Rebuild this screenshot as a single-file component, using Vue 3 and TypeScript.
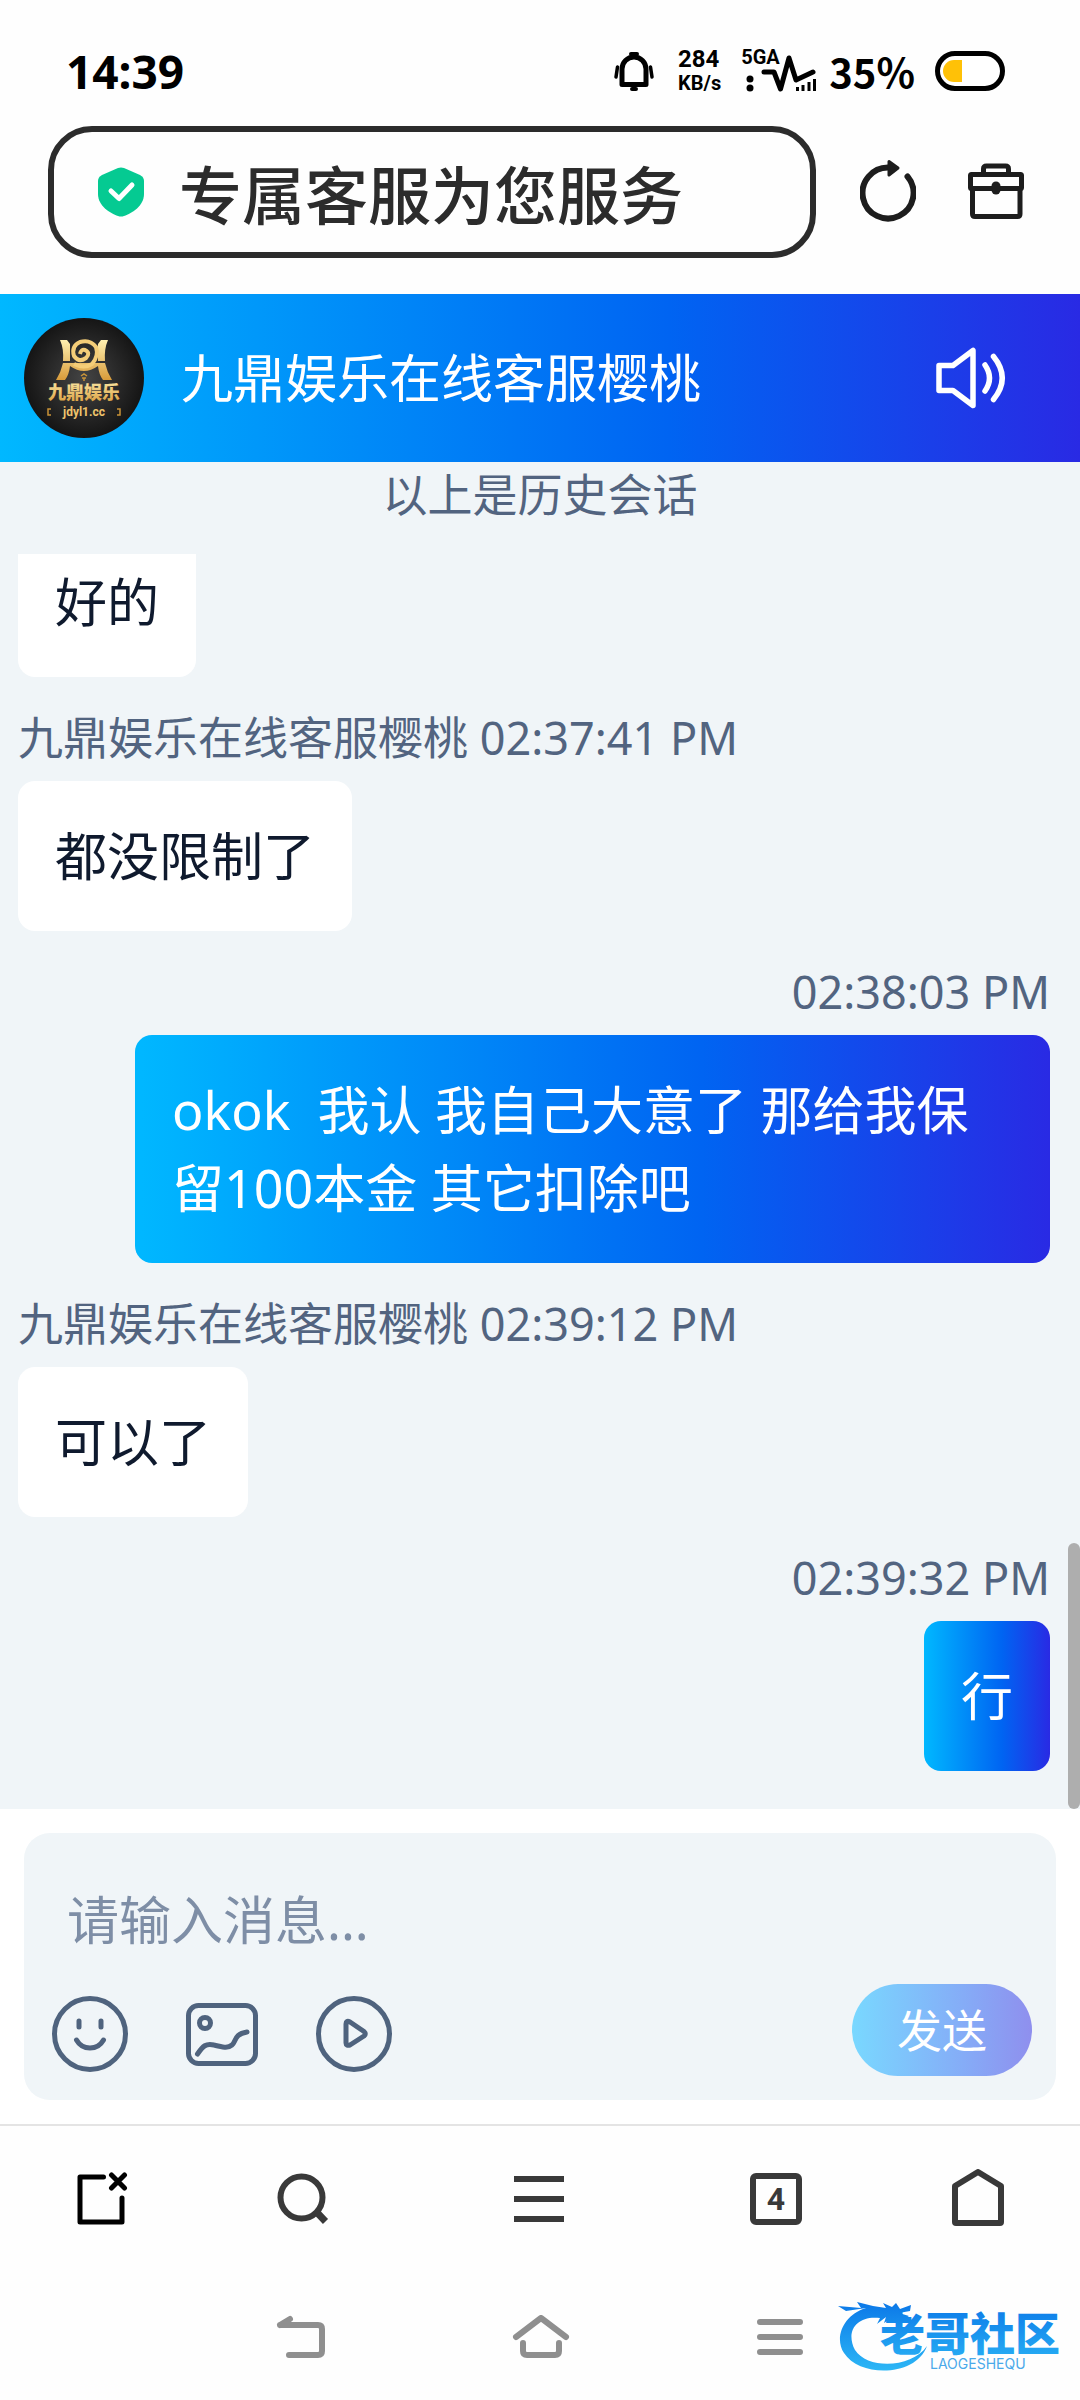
<script setup lang="ts">
import { ref } from 'vue'

interface Message {
  id: number
  mine: boolean
  meta: string
  text: string
}

const agent = '九鼎娱乐在线客服樱桃'
const draft = ref('')

const messages: Message[] = [
  { id: 1, mine: false, meta: '', text: '好的' },
  { id: 2, mine: false, meta: `${agent} 02:37:41 PM`, text: '都没限制了' },
  { id: 3, mine: true, meta: '02:38:03 PM', text: 'okok  我认 我自己大意了 那给我保留100本金 其它扣除吧' },
  { id: 4, mine: false, meta: `${agent} 02:39:12 PM`, text: '可以了' },
  { id: 5, mine: true, meta: '02:39:32 PM', text: '行' },
]
</script>

<template>
  <div class="screen">
    <div class="status">
      <span class="clock">14:39</span>
      <div class="status-right">
        <svg class="bell" width="40" height="40" viewBox="0 0 40 40" aria-hidden="true">
          <path d="M8 33.500V18a12 12 0 0 1 24 0V33.500Z" fill="none" stroke="#000" stroke-width="5" stroke-linejoin="round" />
          <path d="M17 3h6M18 38h4" stroke="#000" stroke-width="4" stroke-linecap="round" />
          <path d="M3.500 16L2 26M36.500 16L38 26" stroke="#000" stroke-width="3.500" stroke-linecap="round" />
        </svg>
        <div class="speed"><span>284</span><span class="unit">KB/s</span></div>
        <div class="signal">
          <span class="network">5GA</span>
          <svg width="76" height="42" viewBox="743 51 76 42" aria-hidden="true">
            <circle cx="752" cy="80" r="3.500" /><circle cx="752" cy="89" r="3.500" />
            <path d="M766 73H776L782.500 90L791 59L798 81L815 73" fill="none" stroke="#000" stroke-width="5" stroke-linecap="round" stroke-linejoin="round" />
            <path d="M799.500 92v-4M805 92v-6M811 92v-9M816.500 92v-12" stroke="#000" stroke-width="3" />
          </svg>
        </div>
        <span class="percent">35%</span>
        <svg class="battery" width="70" height="40" viewBox="0 0 70 40" aria-hidden="true">
          <rect x="2.500" y="2.500" width="65" height="35" rx="17.500" fill="#fff" stroke="#000" stroke-width="5" />
          <path d="M27 9V31H19a11 11 0 0 1 0-22Z" fill="#ffc107" />
        </svg>
      </div>
    </div>

    <div class="browser">
      <label class="address">
        <svg width="46" height="50" viewBox="0 0 46 50" aria-hidden="true">
          <path d="M20 1Q23 0 26 1L42 8Q46 10 46 14V27C46 39 34 46 26 49Q23 50 20 49C12 46 0 39 0 27V14Q0 10 4 8Z" fill="#05ca92" />
          <path d="M13 24L21 31.500L34 18" fill="none" stroke="#fff" stroke-width="5" stroke-linecap="round" stroke-linejoin="round" />
        </svg>
        <input type="text" value="专属客服为您服务" aria-label="网址" readonly />
      </label>
      <button class="plain" aria-label="刷新">
        <svg width="56" height="64" viewBox="860 160 56 64">
          <path d="M907.500 176.500A25.500 25.500 0 1 1 889 167.500" fill="none" stroke="#1d1d1d" stroke-width="6" stroke-linecap="round" />
          <path d="M889 161.500L898 168L889 175Z" fill="#1d1d1d" stroke="#1d1d1d" stroke-width="3" stroke-linejoin="round" />
        </svg>
      </button>
      <button class="plain" aria-label="工具箱">
        <svg width="56" height="64" viewBox="968 160 56 64" fill="none" stroke="#1d1d1d" stroke-width="5">
          <path d="M983.500 174V169Q983.500 166 986.500 166H1005.500Q1008.500 166 1008.500 169V174M972.500 190V214Q972.500 216.500 975 216.500H1017.500Q1020 216.500 1020 214V190" />
          <rect x="970.500" y="174.500" width="51" height="14" rx="1" />
          <path d="M996 186V190" stroke-width="9" stroke-linecap="round" />
        </svg>
      </button>
    </div>

    <header class="agent">
      <svg class="avatar" width="120" height="120" viewBox="0 0 120 120" role="img" aria-label="九鼎娱乐">
        <defs>
          <linearGradient id="gold" x1="0" y1="0" x2="0" y2="1">
            <stop offset="0" stop-color="#fff0b0" /><stop offset="1" stop-color="#d89b3a" />
          </linearGradient>
          <radialGradient id="coal"><stop offset="0" stop-color="#444" /><stop offset="1" stop-color="#151515" /></radialGradient>
        </defs>
        <circle cx="60" cy="60" r="60" fill="url(#coal)" />
        <path d="M36 22H43L46 26V43H39Q40 31 36 22ZM84 22H77L74 26V43H81Q80 31 84 22ZM39 45H81Q83 54 88 62H79Q75 57 74 48Q60 58 46 48Q45 57 41 62H32Q37 54 39 45Z" fill="url(#gold)" />
        <path d="M56 36Q57 31 61 32Q67 35 62 40Q55 45 50 38Q47 28 56 24Q66 21 72 29Q75 38 68 46Q60 51 50 46" fill="none" stroke="#f4cd78" stroke-width="4" />
        <path d="M57 58L60 56L63 58M58 60H62M60 60V63" fill="none" stroke="#c99337" stroke-width="1.500" />
        <text x="60" y="81" text-anchor="middle" font-size="18" font-weight="900" fill="url(#gold)">九鼎娱乐</text>
        <text class="domain" x="60" y="98" text-anchor="middle" font-size="12" font-weight="700" fill="#efc46c">jdyl1.cc</text>
        <path d="M27 91H24V97H27M93 91H96V97H93" fill="none" stroke="#c99337" stroke-width="1.500" />
      </svg>
      <h1>{{ agent }}</h1>
      <button class="plain" aria-label="声音">
        <svg width="72" height="64" viewBox="935 345 72 64" fill="none" stroke="#fff" stroke-width="5.500" stroke-linecap="round" stroke-linejoin="round">
          <path d="M939 364.500H953L973 349.500V404.500L953 389.500H939Z" />
          <path d="M985 364Q994 377 985 390M993.500 355.500Q1011 377 993.500 398.500" />
        </svg>
      </button>
    </header>

    <main class="chat">
      <p class="history">以上是历史会话</p>
      <div class="list">
        <article v-for="m in messages" :key="m.id" :class="{ mine: m.mine, scrolled: !m.meta }">
          <p v-if="m.meta" class="meta">{{ m.meta }}</p>
          <p class="bubble">{{ m.text }}</p>
        </article>
      </div>
      <div class="scrollbar"></div>
    </main>

    <form class="composer" @submit.prevent>
      <div class="box">
        <textarea v-model="draft" rows="1" placeholder="请输入消息..." aria-label="消息"></textarea>
        <div class="toolbar">
          <div class="tools">
            <button type="button" class="plain" aria-label="表情">
              <svg width="76" height="76" viewBox="0 0 76 76" fill="none" stroke="#4f637e" stroke-width="5" stroke-linecap="round">
                <circle cx="38" cy="38" r="35.500" />
                <path d="M27 25V31M49 25V31M24.500 44Q29 52 38 52Q47 52 51.500 44" />
              </svg>
            </button>
            <button type="button" class="plain" aria-label="图片">
              <svg width="76" height="76" viewBox="0 0 76 76" fill="none" stroke="#4f637e" stroke-width="5" stroke-linecap="round">
                <rect x="4.500" y="9.500" width="67" height="58" rx="10" />
                <circle cx="21" cy="27" r="5.500" />
                <path d="M13.500 58C19 50 22 47 30 49C39 51 43 53 48 49C52 46 50 38 63 36" />
              </svg>
            </button>
            <button type="button" class="plain" aria-label="视频">
              <svg width="76" height="76" viewBox="0 0 76 76" fill="none" stroke="#4f637e" stroke-width="5" stroke-linejoin="round">
                <circle cx="38" cy="38" r="35.500" />
                <path d="M30 28Q30 24 34 26L48 35.500Q50.500 38 48 40L34 49Q30 50 30 47Z" />
              </svg>
            </button>
          </div>
          <button class="send">发送</button>
        </div>
      </div>
    </form>

    <nav class="browser-nav">
      <button class="plain" aria-label="关闭标签页">
        <svg width="52" height="56" viewBox="76 2171 52 56" fill="none" stroke="#000" stroke-width="5" stroke-linecap="round" stroke-linejoin="round">
          <path d="M103.500 2177H80V2222H122V2198" />
          <path d="M111.500 2175L124.500 2188M124.500 2175L111.500 2188" />
        </svg>
      </button>
      <button class="plain" aria-label="搜索">
        <svg width="52" height="56" viewBox="277 2171 52 56" fill="none" stroke="#393939" stroke-width="6">
          <circle cx="301.500" cy="2197.500" r="21" /><path d="M317 2212.500L325.500 2221.500" stroke-width="7" />
        </svg>
      </button>
      <button class="plain" aria-label="菜单">
        <svg width="52" height="56" viewBox="0 0 52 56" stroke="#393939" stroke-width="6"><path d="M1 8H51M1 28H51M1 48H51" /></svg>
      </button>
      <button class="plain" aria-label="标签页"><span class="count">4</span></button>
      <button class="plain" aria-label="主页">
        <svg width="52" height="60" viewBox="0 0 52 60" fill="none" stroke="#393939" stroke-width="6" stroke-linejoin="round">
          <path d="M3 17L26 3L49 17V53Q49 54 48 54H4Q3 54 3 53Z" />
        </svg>
      </button>
    </nav>

    <div class="system-nav">
      <button class="plain" aria-label="返回">
        <svg width="50" height="44" viewBox="275 2315 50 44" fill="none" stroke="#8f8f8f" stroke-width="6" stroke-linecap="round">
          <path d="M279 2325H317Q321 2325 321 2329V2351Q321 2355 317 2355H288M279 2325L289 2319" />
        </svg>
      </button>
      <button class="plain" aria-label="桌面">
        <svg width="58" height="44" viewBox="511 2315 58 44" fill="none" stroke="#8f8f8f" stroke-width="6" stroke-linecap="round" stroke-linejoin="round">
          <path d="M515 2337L540 2318L565 2337M522 2343V2351Q522 2355 526 2355H554Q558 2355 558 2351V2343" />
        </svg>
      </button>
      <button class="plain" aria-label="最近任务">
        <svg width="48" height="44" viewBox="0 0 48 44" stroke="#8f8f8f" stroke-width="6" stroke-linecap="round"><path d="M4 7H44M4 22H44M4 37H44" /></svg>
      </button>
      <svg class="community" width="228" height="80" viewBox="836 2296 228 80" role="img" aria-label="老哥社区">
        <defs>
          <linearGradient id="sea" x1="0" y1="2302" x2="0" y2="2372" gradientUnits="userSpaceOnUse">
            <stop offset="0" stop-color="#0b78e8" /><stop offset="1" stop-color="#2db8f6" />
          </linearGradient>
        </defs>
        <path d="M866 2308C843 2315 834 2338 844 2353C860 2378 916 2377 927 2346C912 2368 868 2370 855 2350C845 2331 857 2315 880 2318L877 2324L886 2317L884 2323L893 2317L903 2320L909 2316L899 2313L910 2311L911 2305L900 2309L896 2303L892 2307L883 2303L886 2308L873 2306L857 2302L861 2308L838 2306L846 2311Z" fill="url(#sea)" />
        <text x="880" y="2351" font-size="45" font-weight="900" fill="url(#sea)">老哥社区</text>
        <text class="latin" x="930" y="2369" font-size="14" fill="#4aa9ea">LAOGESHEQU</text>
      </svg>
    </div>
  </div>
</template>

<style>
body {
  background: #fff;
}
</style>

<style scoped>
.screen {
  display: flex;
  flex-direction: column;
  min-height: 100vh;
  background: #fefefe;
  font-family: "Noto Sans", "Noto Sans CJK SC", sans-serif;
}
.screen * {
  box-sizing: border-box;
}
svg {
  display: block;
  flex: none;
}
p,
h1 {
  margin: 0;
  font-weight: 400;
}
.plain {
  display: block;
  padding: 0;
  border: 0;
  background: none;
  font: inherit;
  color: inherit;
}
.status {
  display: flex;
  align-items: center;
  justify-content: space-between;
  height: 110px;
  padding: 32px 75px 0 66px;
  color: #000;
}
.clock {
  font-size: 46px;
  line-height: 48px;
  font-weight: 700;
}
.status-right {
  display: flex;
  align-items: center;
}
.speed {
  display: flex;
  flex-direction: column;
  margin: 0 20px 0 24px;
  font: 700 24px/24px Roboto, sans-serif;
}
.unit {
  font-size: 20px;
}
.signal {
  position: relative;
}
.network {
  position: absolute;
  left: 0;
  top: -3px;
  font: 700 20px/20px Roboto, sans-serif;
}
.percent {
  margin: 0 20px 0 12px;
  font: 700 40px/44px "Noto Sans CJK SC", sans-serif;
}
.browser {
  display: flex;
  align-items: center;
  gap: 52px;
  padding: 16px 56px 36px 48px;
}
.address {
  display: flex;
  flex: 1;
  align-items: center;
  gap: 35px;
  min-width: 0;
  height: 132px;
  margin-right: -8px;
  padding: 0 44px;
  border: 6px solid #2c2c2c;
  border-radius: 44px;
}
.address input {
  flex: 1;
  min-width: 0;
  padding: 0;
  border: 0;
  outline: 0;
  background: none;
  color: #2c2c2c;
  font: 500 63px/90px "Noto Sans CJK SC", sans-serif;
}
.agent {
  display: flex;
  align-items: center;
  gap: 37px;
  height: 168px;
  padding: 0 73px 0 24px;
  background: linear-gradient(90deg, #00b8ff, #0064f2 62%, #292ae4);
  color: #fff;
}
.avatar,
.community {
  font-family: "Noto Sans CJK SC", sans-serif;
}
.domain {
  font-family: Roboto, sans-serif;
}
.latin {
  font-family: Inter, sans-serif;
}
.agent h1 {
  flex: 1;
  font-size: 52px;
  line-height: 78px;
}
.chat {
  position: relative;
  flex: 1;
  background: #f0f5f8;
}
.history {
  height: 92px;
  color: #526480;
  font-size: 45px;
  line-height: 66px;
  text-align: center;
}
.list {
  overflow: hidden;
  padding: 0 30px 38px 18px;
}
article {
  display: flex;
  flex-direction: column;
  align-items: flex-start;
}
.mine {
  align-items: flex-end;
}
/* The oldest message is partly scrolled under the history line. */
.scrolled {
  margin-top: -27px;
}
.meta {
  margin: 28px 0 10px;
  color: #526480;
  font-size: 45px;
  line-height: 66px;
}
.bubble {
  max-width: 915px;
  padding: 36px 37px;
  border-radius: 17px;
  background: #fff;
  color: #0f1a2e;
  font-size: 52px;
  line-height: 78px;
  white-space: pre-wrap;
}
.mine .bubble {
  background: linear-gradient(90deg, #00b8ff, #0064f2 62%, #292ae4);
  color: #fff;
}
.scrollbar {
  position: absolute;
  right: 0;
  bottom: 0;
  z-index: 1;
  width: 12px;
  height: 266px;
  border-radius: 6px;
  background: #aeaeae;
}
.composer {
  padding: 24px;
  background: #fff;
  box-shadow: 0 0 20px rgba(0, 0, 0, 0.06);
}
.box {
  padding: 48px 24px 24px 28px;
  border-radius: 26px;
  background: #f0f5f8;
}
textarea {
  display: block;
  width: 100%;
  height: 78px;
  padding: 0 15px;
  border: 0;
  outline: 0;
  resize: none;
  overflow: hidden;
  background: none;
  color: #0f1a2e;
  font: inherit;
  font-size: 52px;
  line-height: 78px;
}
textarea::placeholder {
  color: #7e8ea6;
  opacity: 1;
}
.toolbar {
  display: flex;
  align-items: center;
  justify-content: space-between;
  margin-top: 25px;
}
.tools {
  display: flex;
  gap: 56px;
  padding-top: 8px;
}
.send {
  width: 180px;
  height: 92px;
  padding: 0 0 4px;
  border: 0;
  border-radius: 46px;
  background: linear-gradient(90deg, #79d8ff, #85acf7 62%, #8f8fee);
  color: #fff;
  font: inherit;
  font-size: 45px;
}
.browser-nav {
  position: relative;
  display: grid;
  grid-template-columns: 204fr 198fr 274fr 200fr 204fr;
  place-items: center;
  height: 148px;
  border-top: 2px solid #e4e4e4;
  background: #fefefe;
}
.count {
  display: grid;
  place-items: center;
  width: 52px;
  height: 52px;
  border: 6px solid #393939;
  border-radius: 6px;
  color: #393939;
  font: 700 32px/40px Roboto, sans-serif;
}
.system-nav {
  position: relative;
  display: flex;
  align-items: center;
  justify-content: space-between;
  height: 128px;
  padding: 2px 25.6% 0;
}
.community {
  position: absolute;
  right: 16px;
  top: 24px;
}
</style>
